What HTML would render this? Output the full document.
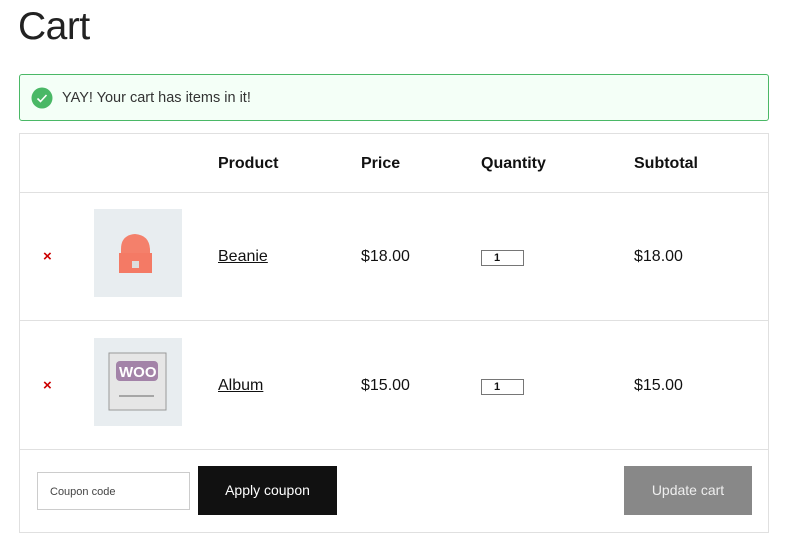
<!DOCTYPE html>
<html><head><style>
*{box-sizing:border-box;margin:0;padding:0}
body{width:798px;height:547px;background:#fff;font-family:"Liberation Sans",sans-serif;color:#111;position:relative;overflow:hidden}
.a{position:absolute}
h1{position:absolute;left:18px;top:5px;font-size:39px;font-weight:400;letter-spacing:-0.5px;color:#222}
.notice{left:19px;top:74px;width:750px;height:47px;border:1px solid #4ab866;background:#f4fff7;border-radius:3px}
.tbl{left:19px;top:133px;width:750px;height:400px;border:1px solid #e0e0e0}
.hl{position:absolute;left:0;width:748px;height:1px;background:#e0e0e0}
.h{position:absolute;top:155px;font-size:16px;font-weight:bold}
.t{position:absolute;font-size:16px}
.x{position:absolute;color:#c00;font-size:15px;font-weight:bold}
.img{position:absolute;left:94px;width:88px;height:88px;background:#e8edf0}
.q{position:absolute;left:481px;width:43px;height:16px;border:1px solid #767676;font-size:11px;padding-left:12px;line-height:14px;font-weight:bold}
u{text-decoration:underline}
</style></head><body>
<h1>Cart</h1>
<div class="a notice"></div>
<svg class="a" style="left:31px;top:87px" width="22" height="22"><circle cx="11" cy="11" r="10.5" fill="#4ab866"/><path d="M6.5 11.5l3 3 6-6.5" stroke="#fff" stroke-width="1.6" fill="none"/></svg>
<div class="t" style="left:62px;top:90px;font-size:14.5px;color:#333">YAY! Your cart has items in it!</div>
<div class="a tbl"><div class="hl" style="top:58px"></div><div class="hl" style="top:186px"></div><div class="hl" style="top:315px"></div></div>
<div class="h" style="left:218px">Product</div>
<div class="h" style="left:361px">Price</div>
<div class="h" style="left:481px">Quantity</div>
<div class="h" style="left:634px">Subtotal</div>

<div class="x" style="left:43px;top:248px">×</div>
<div class="img" style="top:209px"><svg width="88" height="88"><path d="M27 40q0-14 14-15q14 1 15 15l0 4h-29z" fill="#f4806b"/><rect x="25" y="44" width="33" height="20" fill="#f47a65"/><rect x="38" y="52" width="7" height="7" fill="#ddd"/></svg></div>
<div class="t" style="left:218px;top:248px"><u>Beanie</u></div>
<div class="t" style="left:361px;top:248px">$18.00</div>
<div class="q" style="top:250px">1</div>
<div class="t" style="left:634px;top:248px">$18.00</div>

<div class="x" style="left:43px;top:377px">×</div>
<div class="img" style="top:338px"><svg width="88" height="88"><rect x="15" y="15" width="57" height="57" fill="#e6e6e6" stroke="#999"/><rect x="22" y="23" width="42" height="20" rx="4" fill="#a383a8"/><text x="25" y="39" font-size="15" font-weight="bold" fill="#fff" font-family="Liberation Sans">WOO</text><path d="M25 58h35" stroke="#666"/></svg></div>
<div class="t" style="left:218px;top:377px"><u>Album</u></div>
<div class="t" style="left:361px;top:377px">$15.00</div>
<div class="q" style="top:379px">1</div>
<div class="t" style="left:634px;top:377px">$15.00</div>

<div class="a" style="left:37px;top:472px;width:153px;height:38px;border:1px solid #ccc;font-size:11px;color:#444;padding:13px 0 0 12px">Coupon code</div>
<div class="a" style="left:198px;top:466px;width:139px;height:49px;background:#111;color:#fff;font-size:14px;text-align:center;line-height:49px">Apply coupon</div>
<div class="a" style="left:624px;top:466px;width:128px;height:49px;background:#888;color:#eee;font-size:14px;text-align:center;line-height:49px">Update cart</div>
</body></html>
